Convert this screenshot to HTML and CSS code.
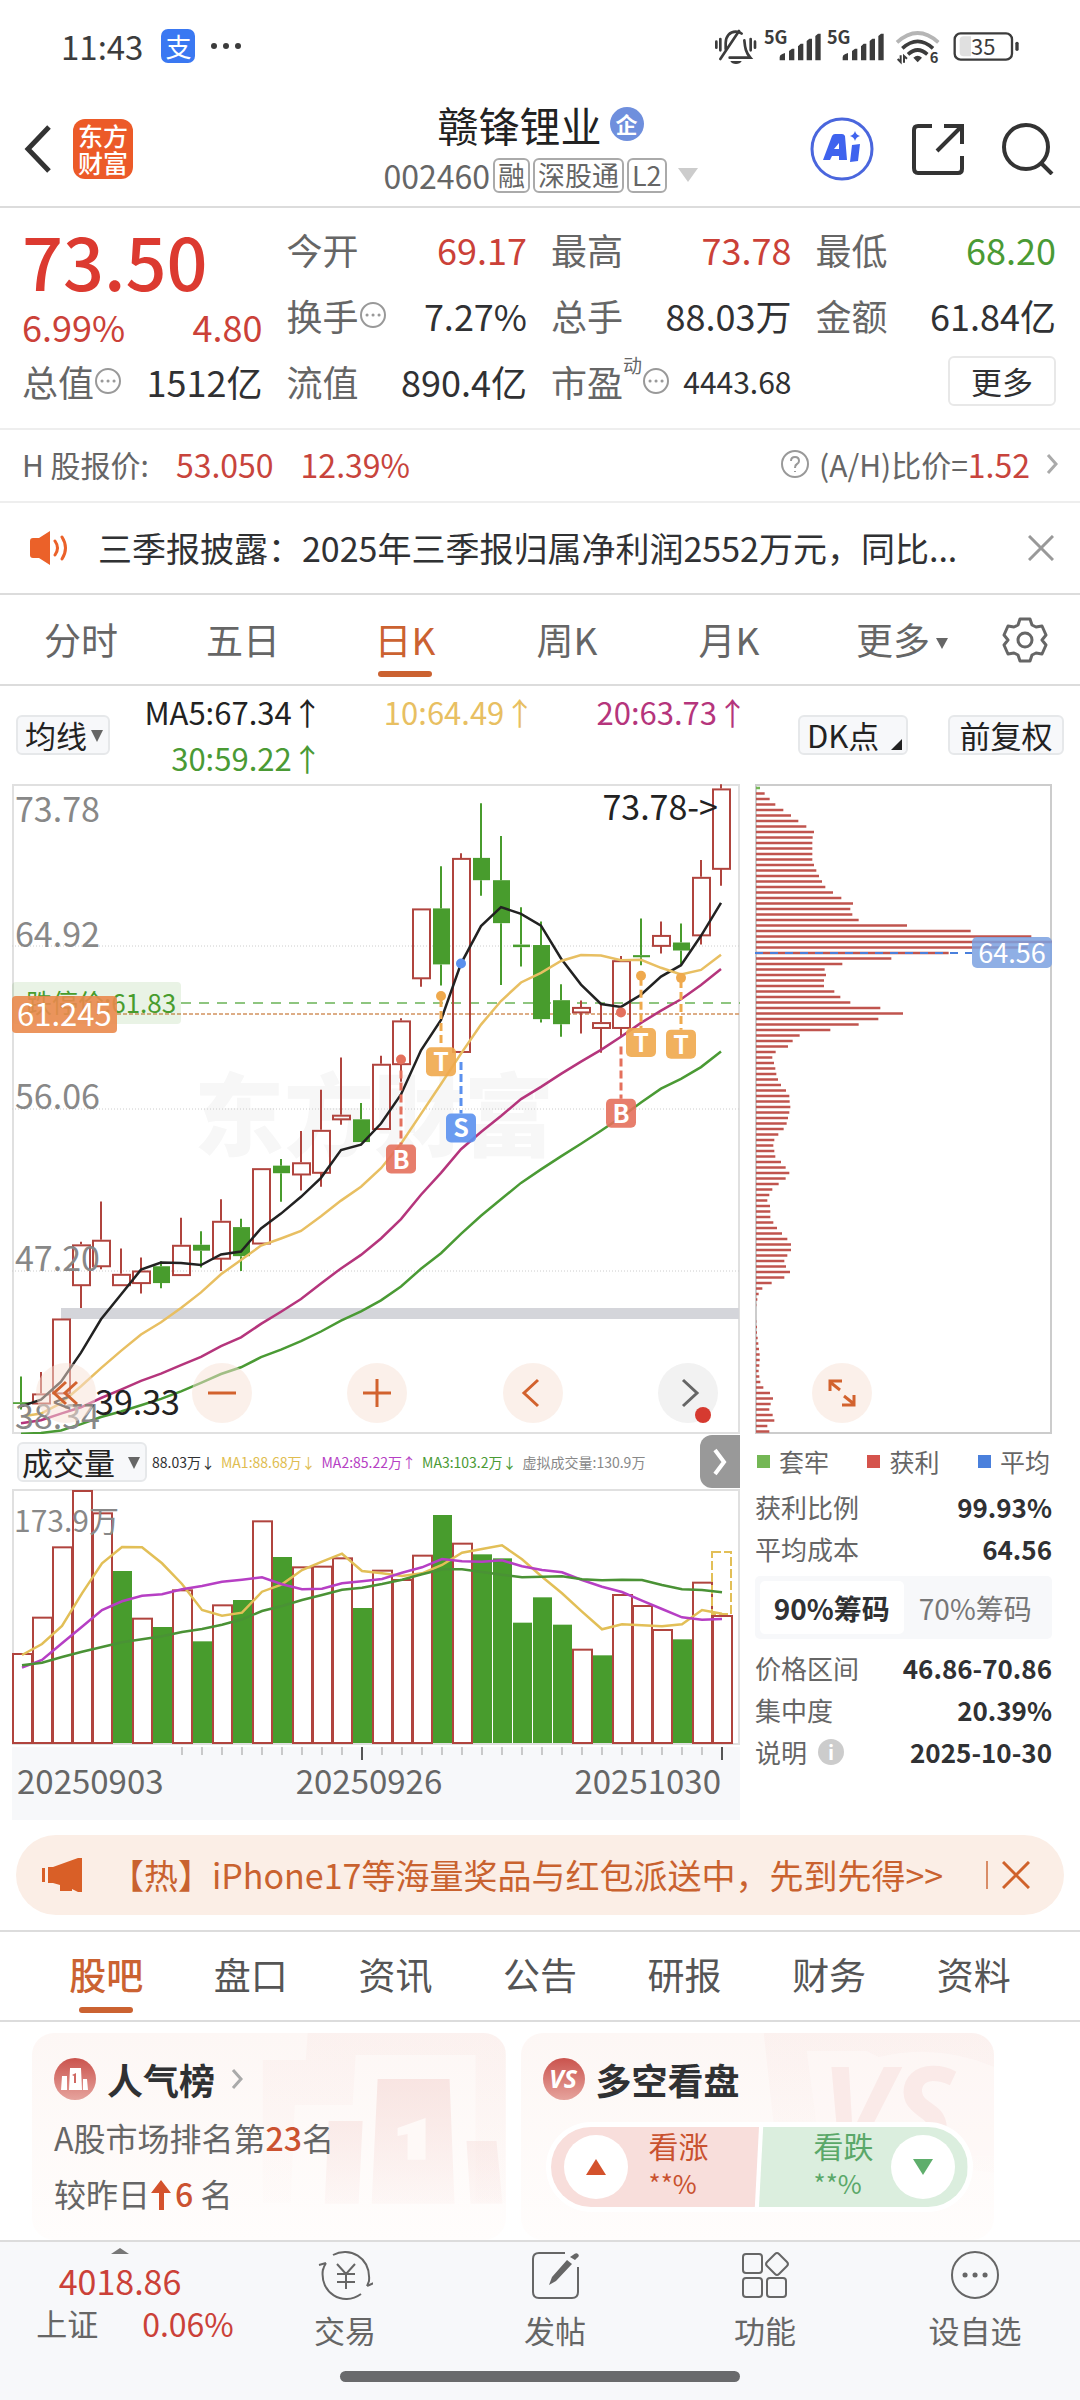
FILE: index.html
```
<!DOCTYPE html>
<html lang="zh-CN">
<head>
<meta charset="utf-8">
<meta name="viewport" content="width=device-width, initial-scale=1">
<title>赣锋锂业 002460</title>
<link rel="stylesheet" href="styles.css">
</head>

<body>
<!-- 状态栏 -->
<div class="status">
	<span class="time">11:43</span>
	<span class="pay">支</span>
	<svg class="dots" viewBox="0 0 32 8"><circle cx="4" cy="4" r="3"/><circle cx="16" cy="4" r="3"/><circle cx="28" cy="4" r="3"/></svg>
	<svg class="sys" viewBox="70 18 930 117">
		<g fill="none" stroke="#3c3c3c" stroke-width="8" stroke-linecap="round">
			<path d="M80 62v18M92 54v34M183 54v34M196 62v18"/>
			<path d="M92 114L148 30"/>
			<path d="M108 84V66c0-20 12-34 30-34 8 0 14 2 18 6M164 58c2 22 4 36 18 52h-62"/>
		</g>
		<path d="M122 120h34c-4 12-30 12-34 0z" fill="#3c3c3c"/>
		<g fill="#3c3c3c" font-family="Noto Sans CJK SC" font-weight="700" font-size="54">
			<text x="223" y="70">5G</text><text x="412" y="70">5G</text><text x="720" y="126" font-size="44">6</text>
		</g>
		<g fill="#3c3c3c">
			<path d="M270 118v-10q0-6 8-9l8-3v22zM298 118V90l9-7h7v35zM325 118V76l8-8h8v50zM351 118V60l8-7h8v65zM377 118V45l8-7h8v80z"/>
			<path d="M459 118v-10q0-6 8-9l8-3v22zM487 118V90l9-7h7v35zM514 118V76l8-8h8v50zM540 118V60l8-7h8v65zM566 118V45l8-7h8v80z"/>
			<path d="M671 110q13-11 26 0l-13 14z"/>
		</g>
		<g fill="none" stroke-width="11">
			<path d="M622 64Q684 8 746 64" stroke="#b5b5b5"/>
			<path d="M638 82Q684 40 730 82M655 100Q684 74 713 100" stroke="#3c3c3c"/>
			<path d="M624 114l9 9v-20M643 125v-20l9 8" stroke="#3c3c3c" stroke-width="6"/>
		</g>
		<rect x="795" y="37" width="172" height="79" rx="18" fill="none" stroke="#3c3c3c" stroke-width="7"/>
		<path d="M822 46h22v60h-22q-12 0-12-12V58q0-12 12-12z" fill="#e0e0e0"/>
		<text x="881" y="101" font-family="Noto Sans CJK SC" font-size="66" fill="#3c3c3c" text-anchor="middle">35</text>
		<rect x="977" y="62" width="10" height="28" rx="5" fill="#3c3c3c"/>
	</svg>
</div>

<header class="head">
	<button class="back" aria-label="返回"><svg viewBox="0 0 28 48"><path d="M25 2L4 24l21 22"/></svg></button>
	<a class="logo" href="#">东方<br>财富</a>
	<div class="stock">
		<h1>赣锋锂业<span class="qi">企</span></h1>
		<p><span>002460</span><i>融</i><i>深股通</i><i>L2</i><b></b></p>
	</div>
	<div class="tools">
		<button aria-label="AI"><svg class="ai" viewBox="0 0 64 64"><circle cx="32" cy="32" r="30"/><path d="M13 43l9-24q1-2 3-2h7q2 0 3 2l2 24h-8v-4h-7l-2 4zM24 32h5v-6zM42 28l8-1-2 17-8 1zM45 14q1 4 5 5-4 1-5 5-1-4-5-5 4-1 5-5z"/></svg></button>
		<button aria-label="分享"><svg class="line" viewBox="0 0 52 52"><path d="M20 3H6Q2 3 2 7v38q0 5 4 5h40q4 0 4-4V33M32 3h18v18M49 4L25 28"/></svg></button>
		<button aria-label="搜索"><svg class="line" viewBox="0 0 52 52"><circle cx="24" cy="24" r="22"/><path d="M39 40l11 11"/></svg></button>
	</div>
</header>

<section class="quote">
	<div class="price red">
		<strong>73.50</strong>
		<p><span>6.99%</span><span>4.80</span></p>
	</div>
	<div class="cell"><span>今开</span><em class="red">69.17</em></div>
	<div class="cell"><span>最高</span><em class="red">73.78</em></div>
	<div class="cell"><span>最低</span><em class="green">68.20</em></div>
	<div class="cell"><span>换手<svg class="more-i" viewBox="0 0 28 28"><circle cx="14" cy="14" r="12"/><path d="M8 14h.1M14 14h.1M20 14h.1"/></svg></span><em>7.27%</em></div>
	<div class="cell"><span>总手</span><em>88.03万</em></div>
	<div class="cell"><span>金额</span><em>61.84亿</em></div>
	<div class="cell"><span>总值<svg class="more-i" viewBox="0 0 28 28"><circle cx="14" cy="14" r="12"/><path d="M8 14h.1M14 14h.1M20 14h.1"/></svg></span><em>1512亿</em></div>
	<div class="cell"><span>流值</span><em>890.4亿</em></div>
	<div class="cell"><span>市盈<sup>动</sup><svg class="more-i" viewBox="0 0 28 28"><circle cx="14" cy="14" r="12"/><path d="M8 14h.1M14 14h.1M20 14h.1"/></svg></span><em class="sm">4443.68</em></div>
	<div class="cell end"><button class="btn-more">更多</button></div>
</section>

<div class="hk">
	<span>H 股报价:</span><b>53.050</b><b>12.39%</b>
	<a href="#"><svg class="ask" viewBox="0 0 30 30"><circle cx="15" cy="15" r="13"/><path d="M11 12q0-4 4-4t4 4q0 2-2 3-2 1-2 4M15 22v1"/></svg>(A/H)比价=<em>1.52</em><svg class="arr" viewBox="0 0 12 22"><path d="M2 2l8 9-8 9"/></svg></a>
</div>

<div class="notice">
	<svg class="horn" viewBox="0 0 40 34"><path d="M1 10q0-3 3-3h6l11-7v34l-11-7H4q-3 0-3-3z" fill="#eb6129"/><path d="M26 10q5 7 0 14M33 6q7 11 0 22" fill="none" stroke="#eb6129" stroke-width="3" stroke-linecap="round"/></svg>
	<a href="#">三季报披露：2025年三季报归属净利润2552万元，同比...</a>
	<button aria-label="关闭"><svg viewBox="0 0 26 26"><path d="M1 1l24 24M25 1L1 25"/></svg></button>
</div>

<nav class="period">
	<a href="#">分时</a>
	<a href="#">五日</a>
	<a href="#" class="on">日K</a>
	<a href="#">周K</a>
	<a href="#">月K</a>
	<a href="#">更多<i></i></a>
	<button aria-label="设置"><svg viewBox="0 0 46 46"><path d="M18 2h10l2 6 4 2 6-1 4 9-4 5 4 5-4 9-6-1-4 2-2 6H18l-2-6-4-2-6 1-4-9 4-5-4-5 4-9 6 1 4-2z"/><circle cx="23" cy="23" r="7"/></svg></button>
</nav>

<div class="ma">
	<span class="sel"><select aria-label="指标"><option>均线</option></select></span>
	<ul>
		<li class="c5">MA5:67.34↑</li>
		<li class="c10">10:64.49↑</li>
		<li class="c20">20:63.73↑</li>
		<li class="c30">30:59.22↑</li>
	</ul>
	<button class="dk">DK点</button>
	<button>前复权</button>
</div>

<main class="charts">
	<div class="left">
		<div class="kbox">
			<svg id="kline" viewBox="0 0 728 650"></svg>
			<div class="ctrl">
				<button aria-label="最左"><svg viewBox="0 0 32 32"><path d="M16 5L4 16l12 11M27 5L15 16l12 11"/></svg></button>
				<button aria-label="缩小"><svg viewBox="0 0 32 32"><path d="M2 16h28"/></svg></button>
				<button aria-label="放大"><svg viewBox="0 0 32 32"><path d="M2 16h28M16 2v28"/></svg></button>
				<button aria-label="左移"><svg viewBox="0 0 32 32"><path d="M21 3L7 16l14 13"/></svg></button>
				<button class="gray" aria-label="右移"><svg viewBox="0 0 32 32"><path d="M11 3l14 13-14 13"/></svg></button>
			</div>
		</div>
		<div class="volbar">
			<span class="sel"><select aria-label="副图"><option>成交量</option></select></span>
			<p><span>88.03万↓</span><span class="v1">MA1:88.68万↓</span><span class="v2">MA2:85.22万↑</span><span class="c30">MA3:103.2万↓</span><span class="v4">虚拟成交量:130.9万</span></p>
			<button aria-label="展开"><svg viewBox="0 0 14 28"><path d="M2 2l9 12-9 12"/></svg></button>
		</div>
		<svg id="vol" viewBox="0 0 728 258"></svg>
		<div class="axis">
			<svg id="ticks" viewBox="0 0 728 14"></svg>
			<p><span>20250903</span><span>20250926</span><span>20251030</span></p>
		</div>
	</div>
	<div class="right">
		<div class="kbox">
			<svg id="chip" viewBox="0 0 297 650"></svg>
			<div class="ctrl one">
				<button aria-label="全屏"><svg viewBox="0 0 32 32"><path d="M4 14V4h12M4 5l10 8M28 18v10H16M28 27l-10-8"/></svg></button>
			</div>
		</div>
		<ul class="legend"><li class="l1">套牢</li><li class="l2">获利</li><li class="l3">平均</li></ul>
		<dl>
			<dt>获利比例</dt><dd>99.93%</dd>
			<dt>平均成本</dt><dd>64.56</dd>
		</dl>
		<div class="seg"><button class="on">90%筹码</button><button>70%筹码</button></div>
		<dl>
			<dt>价格区间</dt><dd>46.86-70.86</dd>
			<dt>集中度</dt><dd>20.39%</dd>
			<dt>说明<i>i</i></dt><dd>2025-10-30</dd>
		</dl>
	</div>
</main>

<div class="promo">
	<svg class="mega" viewBox="0 0 40 34"><path d="M0 10h3v14H0zM6 9h5L36 0h4v34h-4l-6-3v2H18v-6l-7-2H6z"/></svg>
	<a href="#">【热】iPhone17等海量奖品与红包派送中，先到先得&gt;&gt;</a>
	<button aria-label="关闭"><svg viewBox="0 0 28 28"><path d="M1 1l26 26M27 1L1 27"/></svg></button>
</div>

<nav class="tabs">
	<a href="#" class="on">股吧</a>
	<a href="#">盘口</a>
	<a href="#">资讯</a>
	<a href="#">公告</a>
	<a href="#">研报</a>
	<a href="#">财务</a>
	<a href="#">资料</a>
</nav>

<section class="cards">
	<div class="card">
		<svg class="bg" viewBox="0 0 474 208">
			<defs><linearGradient id="fade" x1="0" y1="0" x2="0" y2="1"><stop offset="0" stop-color="#f6dcd9" stop-opacity=".7"/><stop offset="1" stop-color="#f6dcd9" stop-opacity=".15"/></linearGradient></defs>
			<path d="M231 27h43L276 0h198v170h-30V22H324l-3 50h-58l-4 98h-28z" fill="url(#fade)" opacity=".3"/>
			<path d="M297 88h34l-4 83h-34zM346 46h72l5 125h-83zM435 108h30l6 63h-32z" fill="url(#fade)"/>
			<path d="M366 95l28-10v42h-18v-26l-10 2z" fill="#fef9f7"/>
		</svg>
		<h2><svg viewBox="0 0 42 42"><circle cx="21" cy="21" r="21" fill="url(#ball)"/><path d="M8 18h5v14H7zM16 10h11l1 22H15zM29 21h4l1 11h-5z" fill="#fff"/><path d="M18 17l4-2v10h-2v-7z" fill="#cf6862"/><defs><linearGradient id="ball" x1="0" y1="0" x2="0" y2="1"><stop offset="0" stop-color="#ca534d"/><stop offset="1" stop-color="#e6a39d"/></linearGradient></defs></svg>人气榜<svg class="arr" viewBox="0 0 12 22"><path d="M2 2l8 9-8 9"/></svg></h2>
		<p>A股市场排名第<b>23</b>名</p>
		<p>较昨日<svg class="up" viewBox="0 0 20 30"><path d="M10 0l10 13h-7v17H8V13H0z"/></svg><b>6</b> 名</p>
	</div>
	<div class="card">
		<svg class="bg" viewBox="0 0 474 208">
			<path d="M243 0h231v140l-160-20h-58z" fill="url(#fade)" opacity=".3"/>
			<path d="M286 18h60l12 6q60-14 116 10v90H300z" fill="#fef8f6" opacity=".7"/>
			<text x="300" y="120" class="vsbig">VS</text>
		</svg>
		<h2><svg viewBox="0 0 42 42"><circle cx="21" cy="21" r="21" fill="url(#ball)"/><text x="20" y="30" class="vs">VS</text></svg>多空看盘</h2>
		<div class="vote">
			<button class="rise"><i></i><span>看涨<small>**%</small></span></button>
			<button class="fall"><span>看跌<small>**%</small></span><i></i></button>
		</div>
	</div>
</section>

<footer>
	<nav class="foot">
		<a href="#" class="idx"><i></i><b>4018.86</b><span>上证<em>0.06%</em></span></a>
		<a href="#"><svg viewBox="0 0 56 52"><path d="M16 6C32-3 54 8 52 32l-2 5M2 16l7-2M6 20c-4 24 20 38 38 25M9 14q-2 3-3 7M50 37l7-3M20 15l9 10 9-10M29 25v15M20 25h18M20 33h18"/></svg>交易</a>
		<a href="#"><svg viewBox="0 0 56 52"><path d="M38 4H12q-6 0-6 6v33q0 6 6 6h33q6 0 6-6V18"/><path d="M46 6q3-3 5-1 2 2-1 4l-2 2-5-3zM40 11l5 4-16 17-7 4 3-8z" fill="#666" stroke="none"/></svg>发帖</a>
		<a href="#"><svg viewBox="0 0 56 52"><rect x="6" y="5" width="19" height="19" rx="3"/><rect x="6" y="29" width="19" height="19" rx="3"/><rect x="30" y="29" width="19" height="19" rx="3"/><path d="M38 5q2-2 4 0l8 8q2 2 0 4l-8 8q-2 2-4 0l-8-8q-2-2 0-4z"/></svg>功能</a>
		<a href="#"><svg viewBox="0 0 56 52"><circle cx="28" cy="26" r="23"/><path d="M18 26h.1M28 26h.1M38 26h.1" stroke-width="5" stroke-linecap="round"/></svg>设自选</a>
	</nav>
	<div class="home"></div>
</footer>
<script src="chart.js"></script>
</body>
</html>
```
FILE: styles.css
```
*{ margin:0; padding:0; list-style:none; box-sizing:border-box;}
body{ background:#fff; color:#303133; font-family:"Noto Sans CJK SC","Noto Sans",sans-serif; font-size:32px; line-height:40px; display:flex; flex-direction:column; min-height:100vh;}
a{ color:inherit; text-decoration:none;}
button,select{ font:inherit; color:inherit; background:none; border:0; appearance:none;}
em,i{ font-style:normal;}
svg{ display:block;}
.red{ color:#cb4138;}
.green,.c30{ color:#4a9a34;}

/* 状态栏 */
.status{ display:flex; align-items:center; height:92px; padding:0 57px 0 61px; color:#3c3c3c;}
.time{ font-size:33px; line-height:34px;}
.pay{ width:34px; height:34px; margin:0 15px 0 18px; border-radius:7px; background:#3a78f2; color:#fff; font-size:26px; line-height:33px; text-align:center;}
.dots{ width:32px; fill:#3c3c3c;}
.sys{ width:310px; height:39px; margin-left:auto; overflow:visible;}

/* 头部 */
.head{ display:grid; grid-template-columns:49px 60px 1fr auto; align-items:center; height:116px; padding:0 26px 0 24px; border-bottom:2px solid #dcdcdc;}
.back svg{ width:28px; height:48px; fill:none; stroke:#333; stroke-width:5;}
.logo{ height:60px; padding-top:3px; border-radius:12px; background:#ec5a28; color:#fff; font-size:25px; line-height:27px; text-align:center; font-weight:500;}
.stock{ padding-left:138px; text-align:center;}
.stock h1{ display:flex; justify-content:center; align-items:center; gap:8px; font-size:41px; line-height:52px; font-weight:normal; color:#222;}
.qi{ width:34px; height:34px; border-radius:50%; background:#6f8fdd; color:#fff; font-size:22px; line-height:33px; font-weight:bold;}
.stock p{ display:flex; justify-content:center; align-items:center; gap:3px; height:50px; color:#666;}
.stock i{ height:35px; padding:0 3px; border:2px solid #aaa; border-radius:6px; font-size:27px; line-height:30px;}
.stock b{ margin-left:8px; border:10px solid transparent; border-top:14px solid #ccc; border-bottom:0;}
.tools{ display:flex; align-items:center; gap:38px;}
.ai{ width:64px; height:64px; fill:#3f63ee; fill-rule:evenodd;}
.ai circle{ fill:none; stroke:#4a66dd; stroke-width:3;}
.line{ width:52px; height:52px; fill:none; stroke:#333; stroke-width:4;}

/* 报价 */
.quote{ display:grid; grid-template-columns:repeat(4,1fr); grid-auto-rows:66px; column-gap:24px; padding:8px 24px 14px 22px; border-bottom:2px solid #eee; font-size:36px;}
.price{ grid-row:span 2; line-height:44px;}
.price strong{ display:block; font-size:72px; line-height:88px; font-weight:500; color:#dc3a30;}
.price p,.cell{ display:flex; justify-content:space-between; align-items:center;}
.cell span{ display:flex; align-items:center; color:#666; white-space:nowrap;}
.cell em{ white-space:nowrap;}
.cell .sm{ font-size:30px;}
.cell sup{ align-self:flex-start; margin-top:-6px; font-size:19px; line-height:20px;}
.cell.end{ justify-content:flex-end;}
.more-i{ width:28px; height:28px; fill:none; stroke:#999; stroke-width:2;}
.more-i path{ stroke-width:3; stroke-linecap:round;}
.btn-more{ width:108px; height:50px; border:2px solid #e8e8e8; border-radius:6px; font-size:31px; line-height:44px;}

.hk{ display:flex; align-items:center; height:73px; padding:0 22px 4px; border-bottom:2px solid #eee; font-size:30px; color:#666;}
.hk b{ margin-left:27px; font-size:32px; font-weight:normal; color:#c8443c;}
.hk a{ display:flex; align-items:center; margin-left:auto;}
.hk em{ font-size:32px; color:#c8443c;}
.ask{ width:30px; margin-right:9px; fill:none; stroke:#999; stroke-width:2;}
.arr{ width:12px; height:22px; margin-left:16px; fill:none; stroke:#aaa; stroke-width:3;}

.notice{ display:flex; align-items:center; height:92px; padding:0 26px 0 29px; border-bottom:2px solid #dcdcdc; font-size:34px;}
.notice a{ flex:1; margin-left:29px; line-height:56px; white-space:nowrap;}
.horn{ width:40px; height:34px;}
.notice button svg{ width:26px; height:26px; stroke:#999; stroke-width:3;}

/* 周期 */
.period{ display:grid; grid-template-columns:repeat(5,162fr) 184fr 62fr; align-items:center; height:91px; padding-right:24px; border-bottom:2px solid #dcdcdc; font-size:37px; color:#666; text-align:center;}
.period a{ line-height:89px; position:relative;}
.period i{ display:inline-block; margin-left:6px; vertical-align:6px; border:6px solid transparent; border-top:11px solid #666; border-bottom:0;}
.period svg{ width:46px; height:46px; margin:0 auto; fill:none; stroke:#666; stroke-width:3; stroke-linejoin:round;}
.on{ color:#cb6231;}
.period .on:after,.tabs .on:after{ content:""; position:absolute; left:50%; bottom:7px; width:54px; height:6px; margin-left:-27px; border-radius:3px; background:#cb6231;}

.ma{ display:flex; align-items:center; height:98px; padding:0 16px; font-size:31px;}
.ma ul{ flex:1; display:grid; grid-template-columns:repeat(3,1fr); margin-right:50px; line-height:46px; text-align:right; white-space:nowrap;}
.sel{ position:relative;}
.sel:after{ content:""; position:absolute; right:7px; top:15px; border:6px solid transparent; border-top:12px solid #666; border-bottom:0; pointer-events:none;}
.sel select,.ma button{ display:block; height:40px; padding:0 7px; border:2px solid #e6e8ea; border-radius:6px; background:#f7f8fa; font-size:31px; line-height:34px; color:#222; white-space:nowrap;}
.sel select{ width:94px;}
.ma .dk{ position:relative; width:110px; margin-right:40px; text-align:left;}
.ma .dk:after{ content:""; position:absolute; right:4px; bottom:3px; border-left:11px solid transparent; border-bottom:11px solid #222;}
.ma button{ width:116px;}
.c5{ color:#222;}
.c10{ color:#e8bf62;}
.c20{ color:#b5357c;}

/* 图表 */
.charts{ display:grid; grid-template-columns:minmax(0,728fr) minmax(0,297fr); column-gap:15px; padding:0 28px 0 12px;}
.kbox{ position:relative;}
.charts>div>svg,.kbox>svg{ width:100%;}
.ctrl{ position:absolute; left:0; right:0; bottom:11px; display:flex; justify-content:space-between; padding:0 22px 0 24px;}
.ctrl button{ position:relative; width:60px; height:60px; border-radius:50%; background:rgba(247,226,214,.5);}
.ctrl button svg{ width:32px; height:32px; margin:0 auto; fill:none; stroke:#d2622e; stroke-width:3;}
.ctrl .gray{ background:#f2f2f2;}
.ctrl .gray svg{ stroke:#666;}
.ctrl .gray:after{ content:""; position:absolute; right:7px; bottom:0; width:16px; height:16px; border-radius:50%; background:#d63a30;}
.one{ padding:0 0 0 57px;}

.volbar{ display:flex; align-items:center; height:55px; padding-left:5px;}
.volbar .sel select{ width:130px; padding:0 3px;}
.volbar p{ flex:1; display:flex; gap:6px; padding-left:5px; font-size:14px; white-space:nowrap;}
.volbar button{ flex:none; width:40px; height:53px; border-radius:12px 0 0 12px; background:#999;}
.volbar button svg{ height:28px; margin:0 auto; fill:none; stroke:#fff; stroke-width:4;}
.v1{ color:#e0bd50;}
.v2{ color:#b63fc4;}
.v4{ color:#888;}
.axis{ height:73px; background:#f7f8fa;}
.axis p{ display:flex; justify-content:space-between; padding:0 19px 0 5px; font-size:33px; line-height:38px; color:#666;}

.legend{ display:flex; justify-content:space-between; padding:7px 2px 0; font-size:25px; color:#666;}
.legend li{ display:flex; align-items:center; gap:9px;}
.legend li:before{ content:""; width:13px; height:13px; background:#74b755;}
.legend .l2:before{ background:#d5534c;}
.legend .l3:before{ background:#4a80dc;}
dl{ display:grid; grid-template-columns:auto auto; justify-content:space-between; padding:5px 0; font-size:26px; line-height:42px;}
dt{ display:flex; align-items:center; color:#666;}
dd{ text-align:right; font-weight:bold;}
dt i{ width:26px; height:26px; margin-left:11px; border-radius:50%; background:#ccc; color:#fff; font-size:20px; line-height:26px; font-weight:bold; text-align:center;}
.seg{ display:grid; grid-template-columns:1fr 1fr; height:63px; margin:1px 0 3px; padding:5px; border-radius:5px; background:#f7f8fa; font-size:28px; color:#777;}
.seg .on{ border-radius:5px; background:#fff; color:#303133; font-weight:bold;}

.promo{ display:flex; align-items:center; height:80px; margin:15px 16px; padding:0 34px 0 26px; border-radius:40px; background:#fbeee6; color:#c9622f; font-size:34px;}
.promo a{ flex:1; margin-left:28px; white-space:nowrap;}
.mega{ width:40px; fill:#d95f27;}
.promo button{ padding-left:14px; border-left:2px solid #d98c67;}
.promo button svg{ width:28px; height:28px; stroke:#d0622b; stroke-width:3;}

.tabs{ display:grid; grid-template-columns:repeat(7,1fr); padding:0 34px; border:solid #dcdcdc; border-width:2px 0; font-size:37px; line-height:84px; color:#555; text-align:center;}
.tabs a{ position:relative; padding-bottom:4px;}
.tabs .on{ color:#cb6231; font-weight:500;}

/* 卡片 */
.cards{ flex:1; display:grid; grid-template-columns:1fr 1fr; gap:15px; padding:11px 86px 0 32px;}
.card{ position:relative; min-height:207px; padding:21px 22px; border-radius:22px; background:linear-gradient(#fdf7f5,#fffdfc); overflow:hidden;}
.card>*{ position:relative;}
.card .bg{ position:absolute; right:0; top:0; width:100%;}
.card h2{ display:flex; align-items:center; font-size:36px; line-height:50px;}
.card h2 svg:first-child{ width:42px; height:42px; margin-right:11px;}
.card p{ margin-top:10px; line-height:46px; color:#666;}
.card p b{ color:#cb5230; font-weight:500;}
.up{ display:inline-block; width:22px; height:30px; fill:#d4522c; margin-right:3px; vertical-align:-3px;}
.vs,.vsbig{ font-family:"Open Sans","Noto Sans",sans-serif; font-weight:bold; font-style:italic; font-size:25px; fill:#fff; text-anchor:middle;}
.vsbig{ font-size:120px; fill:#faeae8; text-anchor:start;}
.vote{ display:flex; width:427px; height:90px; margin:18px 0 0 3px; padding:5px; border-radius:45px; background:#fff; font-size:30px; line-height:38px;}
.vote button{ flex:1; display:flex; align-items:center; gap:21px; padding:0 13px; background:#f8dedb; color:#c9522f; text-align:left; border-radius:40px 0 0 40px; clip-path:polygon(0 0,100% 0,98% 100%,0 100%);}
.vote .fall{ justify-content:flex-end; gap:17px; background:#dbeede; color:#5aa869; border-radius:0 40px 40px 0; clip-path:polygon(2% 0,100% 0,100% 100%,0 100%);}
.vote span{ padding-bottom:6px;}
.vote small{ display:block; font-size:26px;}
.vote i{ width:64px; height:64px; border-radius:50%; background:#fff; display:flex; align-items:center; justify-content:center;}
.vote i:after{ content:""; border:10px solid transparent; border-bottom:16px solid #d4522c; border-top:0;}
.vote .fall i:after{ border-top:16px solid #5fae6c; border-bottom:0;}

/* 底部 */
footer{ background:#f7f8fa; border-top:2px solid #dcdcdc;}
.foot{ display:grid; grid-template-columns:240fr repeat(4,210fr); height:129px; font-size:31px; color:#666; text-align:center;}
.foot svg{ width:56px; height:52px; margin:7px auto 9px; fill:none; stroke:#666; stroke-width:2;}
.idx b{ display:block; font-size:34px; line-height:44px; font-weight:normal; color:#cb4138;}
.idx i{ display:block; width:18px; margin:6px auto 5px; border:9px solid transparent; border-bottom:6px solid #777; border-top:0;}
.idx span{ display:flex; justify-content:center; gap:44px; padding-left:30px;}
.idx em{ font-size:32px; color:#cb4138;}
.home{ width:37%; height:11px; margin:0 auto 20px; border-radius:6px; background:#696a6c;}
```
FILE: chart.js
```
var RED='#b0443e', GREEN='#489c2d', FONT='Noto Sans CJK SC';

function line(x1,y1,x2,y2,c,w,dash){
	return '<path d="M'+x1+' '+y1+'L'+x2+' '+y2+'" stroke="'+c+'" stroke-width="'+w+'"'+(dash?' stroke-dasharray="'+dash+'"':'')+'/>';
}
function rect(x,y,w,h,fill,stroke,r){
	return '<rect x="'+x+'" y="'+y+'" width="'+w+'" height="'+h+'" rx="'+(r||0)+'" fill="'+fill+'"'+(stroke?' stroke="'+stroke+'" stroke-width="2"':'')+'/>';
}
function text(x,y,s,size,fill,anchor,bold){
	return '<text x="'+x+'" y="'+y+'" font-family="'+FONT+'" font-size="'+size+'" fill="'+fill+'" text-anchor="'+(anchor||'start')+'"'+(bold?' font-weight="'+bold+'"':'')+'>'+s+'</text>';
}
function poly(arr,fx,fy,c){
	var p='';
	for(var i=0; i<arr.length; i++)p+=fx(i)+','+fy(arr[i]).toFixed(1)+' ';
	return '<polyline points="'+p+'" fill="none" stroke="'+c+'" stroke-width="2.5"/>';
}

//K线: [涨跌,最高,实体上,实体下,最低]，单位为距顶部的刻度
var K=[[0,1417,1478,1482,1495],[1,1406,1457,1481,1481],[1,1279,1279,1457,1457],[1,1097,1103,1200,1254],[1,1001,1092,1155,1162],[1,1113,1173,1200,1200],
[1,1134,1165,1195,1220],[0,1143,1155,1195,1207],[1,1040,1104,1176,1176],[0,1072,1104,1118,1158],[1,996,1047,1137,1166],[0,1042,1062,1131,1166],
[1,922,922,1101,1101],[0,900,916,934,1002],[1,834,908,937,975],[1,736,831,933,966],[1,659,795,806,819],[0,767,806,860,860],
[1,655,674,829,829],[1,566,571,675,717],[1,305,305,471,491],[0,205,305,438,488],[1,174,185,646,646],[0,55,185,238,275],
[0,133,238,340,487],[0,302,391,397,443],[0,336,392,568,576],[0,485,523,580,610],[1,524,539,552,602],[1,532,575,589,648],
[1,418,428,589,608],[0,329,416,421,440],[1,336,368,394,412],[0,341,386,405,438],[1,190,230,369,391],[1,10,20,211,251]];
var MA=[
	['#222',[1488,1472,1429,1360,1281,1222,1163,1146,1147,1152,1127,1120,1065,1030,990,945,879,866,816,747,642,570,436,347,302,318,346,424,486,532,539,510,467,440,370,292]],
	['#e8bf62',[1512,1505,1480,1440,1397,1356,1317,1288,1254,1217,1174,1140,1106,1089,1071,1036,999,966,922,864,793,722,650,581,525,481,458,430,416,417,428,427,446,462,451,415]],
	['#b5357c',[1528,1521,1505,1490,1468,1448,1427,1410,1390,1370,1345,1324,1292,1263,1233,1196,1160,1128,1089,1043,985,933,877,836,798,758,729,698,669,641,610,577,548,521,487,449]],
	['#4a9a34',[1553,1551,1545,1530,1513,1500,1485,1470,1452,1432,1411,1395,1371,1353,1333,1310,1284,1262,1236,1203,1161,1124,1078,1035,996,957,925,894,864,833,801,766,733,710,682,645]]
];
//买卖点: [序号,字母,圆点,虚线起点,标签]
var MARK=[[19,'B',664,690,866],[21,'T',513,520,635],[22,'S',436,670,792],[30,'B',552,633,757],[31,'T',465,470,589],[33,'T',470,475,593]];
var MC={B:'#e4705c',T:'#efa94d',S:'#5a90ee'};

function kx(i){ return 9+20*i; }
function ky(v){ return v*0.421-4; }

function drawK(){
	var s=rect(1,1,726,648,'#fff','#e0e0e0'), i, d, x;
	s+=text(182,365,'东方财富',90,'#f7f7f7','start',900);
	[162,325,487].forEach(function(y){ s+=line(0,y,728,y,'#ccc',1,'1 2'); });
	s+=rect(49,524,678,11,'#d4d5da');
	s+=line(169,219,728,219,'#69b356',1.5,'10 8')+line(105,230,728,230,'#d2935f',1.5,'4 2');
	for(i=0; i<K.length; i++){
		d=K[i]; x=kx(i);
		var c=d[0]?RED:GREEN, t=ky(d[2]), b=ky(d[3]);
		s+=line(x,ky(d[1]),x,t,c,2)+line(x,b,x,ky(d[4]),c,2);
		s+=d[0]?rect(x-8,t+1,17,Math.max(b-t-1,2),'none',c):rect(x-8,t,17,Math.max(b-t,1.5),c);
	}
	MA.forEach(function(m){ s+=poly(m[1],kx,ky,m[0]); });
	MARK.forEach(function(m){
		var x=kx(m[0]), c=MC[m[1]], y=ky(m[4]);
		s+='<circle cx="'+x+'" cy="'+ky(m[2])+'" r="5" fill="'+c+'"/>';
		s+=line(x,ky(m[3]),x,y,c,3,'8 4');
		s+='<g opacity=".9">'+rect(x-15,y,30,29,c,'',5)+'</g>'+text(x,y+24,m[1],25,'#fff','middle',700);
	});
	s+=text(3,38,'73.78',34,'#888')+text(3,163,'64.92',34,'#888')+text(3,325,'56.06',34,'#888')+text(3,487,'47.20',34,'#888')+text(3,645,'38.34',34,'#888');
	s+='<g opacity=".12">'+rect(0,198,169,42,GREEN,'',4)+'</g>'+text(14,229,'跌停价:61.83',26,GREEN);
	s+='<g opacity=".9">'+rect(0,212,105,37,'#ea8a4c','',4)+'</g>'+text(5,242,'61.245',31,'#fff');
	s+=text(706,36,'73.78-&gt;',34,'#222','end')+text(168,631,'&lt;--39.33',34,'#222','end');
	document.getElementById('kline').innerHTML=s;
}

//成交量
var V=[669,560,349,180,247,-423,563,-591,478,-634,523,-510,271,-381,409,407,382,-534,419,447,374,-255,338,-373,-385,-578,-502,-584,656,-676,492,525,597,-628,455,555];
var VMA=[
	['#e2bf57',[675,642,588,490,400,351,352,400,462,540,557,548,485,463,420,395,371,423,430,438,430,405,368,357,346,388,440,490,545,598,583,586,589,583,540,551]],
	['#b63fc4',[713,690,640,590,540,514,497,493,478,468,455,449,442,463,478,476,460,454,447,428,412,387,394,395,391,409,420,427,450,470,486,512,537,562,569,567]],
	['#4a9235',[706,698,681,665,651,637,628,619,606,597,584,568,543,528,510,495,479,473,462,449,433,418,418,426,434,442,440,439,448,451,449,450,465,478,480,487]]
];
function vx(i){ return 10+20*i; }
function vy(v){ return v/3-59; }
function drawVol(){
	var s=rect(1,1,726,254,'#fff','#e0e0e0');
	for(var i=0; i<V.length; i++){
		var y=vy(Math.abs(V[i]));
		s+=V[i]<0?rect(20*i+1,y,19,254-y,GREEN):rect(20*i+1,y+1,19,253-y,'none',RED);
	}
	s+='<rect x="700" y="63" width="19" height="62" fill="none" stroke="#e2bf57" stroke-width="2" stroke-dasharray="9 3"/>';
	VMA.forEach(function(m){ s+=poly(m[1],vx,vy,m[0]); });
	s+=text(2,43,'173.9万',30,'#888');
	document.getElementById('vol').innerHTML=s;

	var t='';
	for(i=8; i<36; i++){
		var big=i==17||i==35;
		t+=line(vx(i),0,vx(i),big?13:8,big?'#555':'#999',big?2:1);
	}
	document.getElementById('ticks').innerHTML=t;
}

//筹码分布
var C=[12,26,41,58,82,105,127,151,174,170,169,169,169,169,174,181,189,198,208,231,256,291,283,289,308,453,644,826,890,815,578,406,259,206,210,204,204,235,253,283,373,441,367,308,223,131,110,96,59,49,54,58,61,66,75,90,100,101,103,100,96,92,83,67,55,52,55,58,75,89,100,89,68,49,40,34,42,43,43,52,63,78,94,105,105,94,85,90,102,85,47,19,8,4,1,0,0,1,3,3,5,7,9,11,11,10,8,10,13,22,42,51,44,40,50,55,34,40];
function drawChip(){
	var s=rect(1,1,295,648,'#fff','#ccc');
	for(var i=0; i<C.length; i++){
		var y=4+5.5*i;
		s+=line(1,y,1+C[i]/3,y,i?'#c0544e':'#74b755',2.5);
	}
	s+=line(0,169,217,169,'#4a80dc',2,'8 7');
	s+='<g opacity=".85">'+rect(217,153,80,31,'#7ba1e0','',5)+'</g>'+text(257,179,'64.56',27,'#fff','middle');
	document.getElementById('chip').innerHTML=s;
}
drawK();
drawVol();
drawChip();
```
